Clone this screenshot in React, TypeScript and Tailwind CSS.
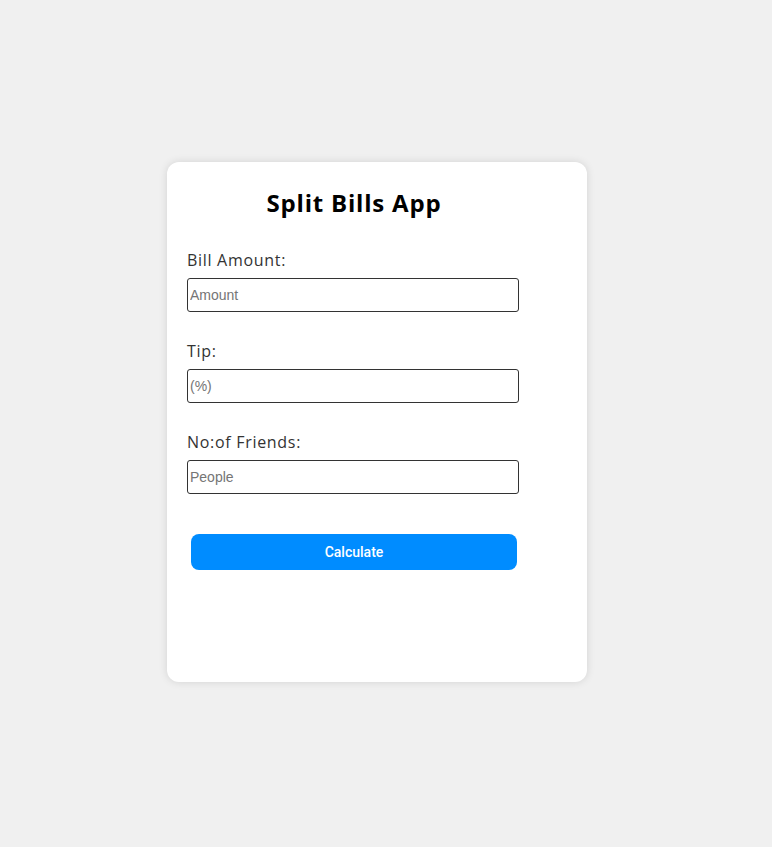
import React, { useState } from "react";

const labelFont = { fontFamily: '"Open Sans", "Noto Sans", sans-serif' };

function Field({ label, placeholder, value, onChange }: { label: string; placeholder: string; value: string; onChange: (v: string) => void }) {
  return (
    <div className="flex flex-col">
      <label className="text-[16px] leading-6 tracking-[0.7px] text-[#333]" style={labelFont}>{label}</label>
      <input
        className="mt-[6px] w-[332px] h-[34px] border border-[#333] rounded-[3px] px-[2px] text-[14px] text-black placeholder:text-[#757575] focus:outline-none font-['Liberation_Sans',Arial,sans-serif]"
        placeholder={placeholder}
        value={value}
        onChange={e => onChange(e.target.value)}
      />
    </div>
  );
}

export default function App() {
  const [amount, setAmount] = useState("");
  const [tip, setTip] = useState("");
  const [people, setPeople] = useState("");

  return (
    <div className="min-h-screen bg-[#f0f0f0] pt-[162px] pl-[167px]">
      <div className="w-[420px] h-[520px] bg-white rounded-xl shadow-[0_0_8px_rgba(0,0,0,0.12)] pl-5 pt-[25px]">
        <div className="w-[334px] flex flex-col">
          <h1 className="text-center text-[24px] leading-8 font-bold tracking-[0.8px] text-black" style={labelFont}>Split Bills App</h1>
          <div className="mt-[29px] flex flex-col gap-[27px]">
            <Field label="Bill Amount:" placeholder="Amount" value={amount} onChange={setAmount} />
            <Field label="Tip:" placeholder="(%)" value={tip} onChange={setTip} />
            <Field label="No:of Friends:" placeholder="People" value={people} onChange={setPeople} />
          </div>
          <button className="mt-[40px] mx-[4px] h-[36px] bg-[#008cff] rounded-lg text-white text-[14px] font-medium font-['Roboto',sans-serif]">
            Calculate
          </button>
        </div>
      </div>
    </div>
  );
}
